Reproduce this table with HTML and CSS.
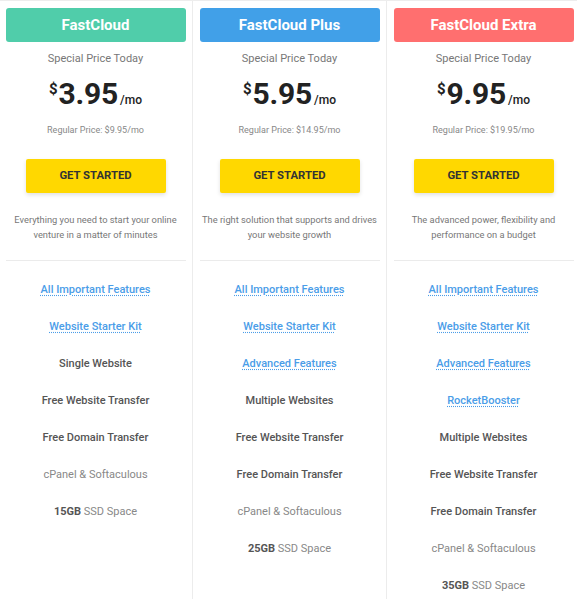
FILE: index.html
```html
<!DOCTYPE html>
<html>
<head>
<meta charset="utf-8">
<link rel="stylesheet" href="styles.css">
</head>
<body>
<div class="plans">
  <div class="plan">
    <div class="plan-name green">FastCloud</div>
    <div class="special">Special Price Today</div>
    <div class="price"><span class="cur">$</span><span class="amount">3.95</span><span class="per">/mo</span></div>
    <div class="regular">Regular Price: $9.95/mo</div>
    <a class="btn">GET STARTED</a>
    <p class="desc">Everything you need to start your online<br>venture in a matter of minutes</p>
    <div class="divider"></div>
    <ul class="features">
      <li><a class="link">All Important Features</a></li>
      <li><a class="link">Website Starter Kit</a></li>
      <li class="strong">Single Website</li>
      <li class="strong">Free Website Transfer</li>
      <li class="strong">Free Domain Transfer</li>
      <li class="light">cPanel &amp; Softaculous</li>
      <li class="light"><b>15GB</b> SSD Space</li>
    </ul>
  </div>
  <div class="plan">
    <div class="plan-name blue">FastCloud Plus</div>
    <div class="special">Special Price Today</div>
    <div class="price"><span class="cur">$</span><span class="amount">5.95</span><span class="per">/mo</span></div>
    <div class="regular">Regular Price: $14.95/mo</div>
    <a class="btn">GET STARTED</a>
    <p class="desc">The right solution that supports and drives<br>your website growth</p>
    <div class="divider"></div>
    <ul class="features">
      <li><a class="link">All Important Features</a></li>
      <li><a class="link">Website Starter Kit</a></li>
      <li><a class="link">Advanced Features</a></li>
      <li class="strong">Multiple Websites</li>
      <li class="strong">Free Website Transfer</li>
      <li class="strong">Free Domain Transfer</li>
      <li class="light">cPanel &amp; Softaculous</li>
      <li class="light"><b>25GB</b> SSD Space</li>
    </ul>
  </div>
  <div class="plan">
    <div class="plan-name red">FastCloud Extra</div>
    <div class="special">Special Price Today</div>
    <div class="price"><span class="cur">$</span><span class="amount">9.95</span><span class="per">/mo</span></div>
    <div class="regular">Regular Price: $19.95/mo</div>
    <a class="btn">GET STARTED</a>
    <p class="desc">The advanced power, flexibility and<br>performance on a budget</p>
    <div class="divider"></div>
    <ul class="features">
      <li><a class="link">All Important Features</a></li>
      <li><a class="link">Website Starter Kit</a></li>
      <li><a class="link">Advanced Features</a></li>
      <li><a class="link">RocketBooster</a></li>
      <li class="strong">Multiple Websites</li>
      <li class="strong">Free Website Transfer</li>
      <li class="strong">Free Domain Transfer</li>
      <li class="light">cPanel &amp; Softaculous</li>
      <li class="light"><b>35GB</b> SSD Space</li>
    </ul>
  </div>
</div>
</body>
</html>
```
FILE: styles.css
```css
html, body {
  margin: 0;
  padding: 0;
  background: #fff;
  overflow: hidden;
}
body {
  font-family: Roboto, "Noto Sans", sans-serif;
  color: #555;
  height: 599px;
}
.plans {
  display: grid;
  grid-template-columns: 194px 194px 194px;
  margin-left: -1px;
  border-top: 1px solid #ededed;
  min-height: 598px;
}
.plan {
  border-right: 1px solid #ececec;
  display: flex;
  flex-direction: column;
  align-items: center;
  text-align: center;
}
.plan-name {
  width: 180px;
  height: 34px;
  line-height: 34px;
  margin-top: 7px;
  border-radius: 3px;
  color: #fff;
  font-weight: 700;
  font-size: 15px;
}
.green { background: #50cdaa; }
.blue { background: #41a0e8; }
.red { background: #ff6f6f; }
.special {
  margin-top: 10px;
  font-size: 11px;
  line-height: 14px;
  color: #777;
}
.price {
  margin-top: 8px;
  height: 40px;
  line-height: 40px;
  color: #222;
  display: flex;
  align-items: baseline;
}
.cur {
  font-size: 15px;
  font-weight: 700;
  position: relative;
  top: -10px;
  margin-right: 1px;
}
.amount {
  font-size: 30px;
  font-weight: 700;
  letter-spacing: -0.2px;
}
.per {
  font-size: 12px;
  font-weight: 500;
  margin-left: 2px;
}
.regular {
  margin-top: 10px;
  font-size: 9px;
  line-height: 12px;
  color: #888;
}
.btn {
  display: block;
  margin-top: 23px;
  width: 140px;
  height: 34px;
  line-height: 34px;
  background: #ffd800;
  border-radius: 2px;
  font-size: 11.3px;
  font-weight: 700;
  color: #333;
  box-shadow: 0 2px 4px rgba(0,0,0,0.12);
}
.desc {
  margin: 19px 0 0;
  font-size: 9.3px;
  line-height: 15px;
  color: #777;
  height: 30px;
}
.divider {
  margin-top: 18px;
  width: 180px;
  height: 1px;
  background: #ebebeb;
}
.features {
  list-style: none;
  margin: 10px 0 0;
  padding: 0;
  width: 180px;
}
.features li {
  height: 37px;
  line-height: 37px;
  font-size: 11px;
}
.features .strong {
  font-weight: 500;
  color: #555;
}
.features .light {
  color: #888;
}
.features .light b {
  font-weight: 700;
  color: #555;
}
.link {
  color: #4a9de8;
  font-weight: 500;
  text-decoration: underline dotted #4a9de8;
  text-underline-offset: 2px;
}
```
